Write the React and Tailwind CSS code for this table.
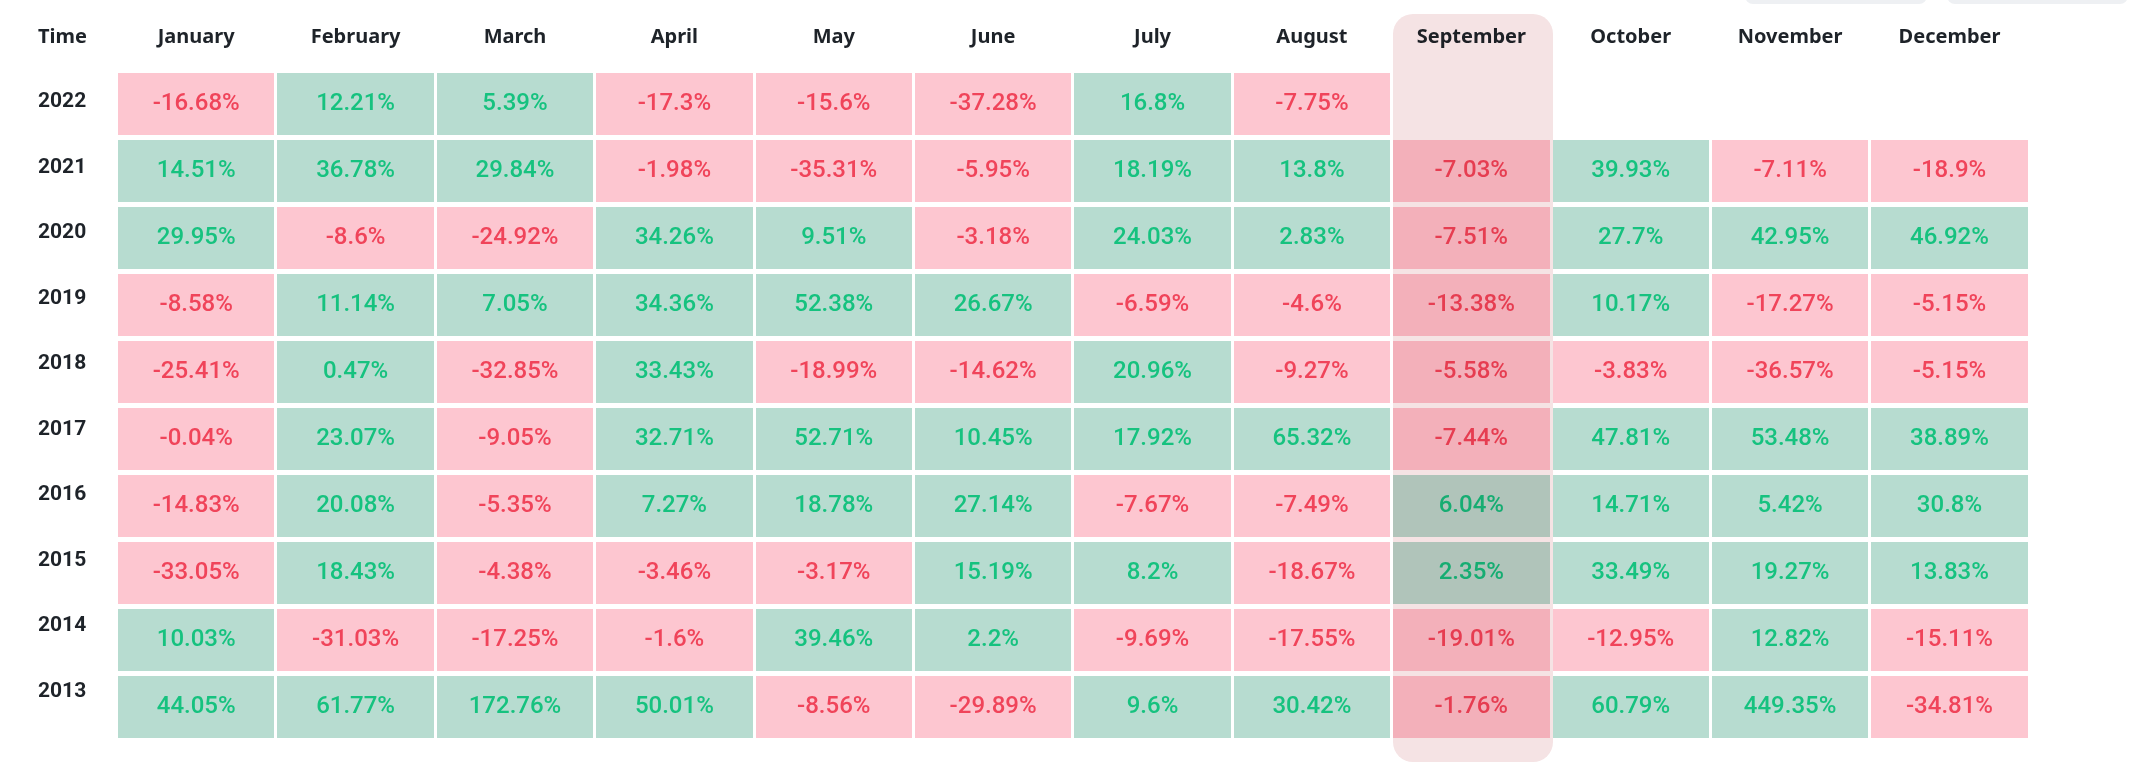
// Monthly returns heatmap — rendement mensuel par année, colonne courante surlignée.
import React from 'react';

const MONTHS = [
  'January', 'February', 'March', 'April', 'May', 'June',
  'July', 'August', 'September', 'October', 'November', 'December',
];

const ROWS = [
  ['2022', ['-16.68%', '12.21%', '5.39%', '-17.3%', '-15.6%', '-37.28%', '16.8%', '-7.75%']],
  ['2021', ['14.51%', '36.78%', '29.84%', '-1.98%', '-35.31%', '-5.95%', '18.19%', '13.8%', '-7.03%', '39.93%', '-7.11%', '-18.9%']],
  ['2020', ['29.95%', '-8.6%', '-24.92%', '34.26%', '9.51%', '-3.18%', '24.03%', '2.83%', '-7.51%', '27.7%', '42.95%', '46.92%']],
  ['2019', ['-8.58%', '11.14%', '7.05%', '34.36%', '52.38%', '26.67%', '-6.59%', '-4.6%', '-13.38%', '10.17%', '-17.27%', '-5.15%']],
  ['2018', ['-25.41%', '0.47%', '-32.85%', '33.43%', '-18.99%', '-14.62%', '20.96%', '-9.27%', '-5.58%', '-3.83%', '-36.57%', '-5.15%']],
  ['2017', ['-0.04%', '23.07%', '-9.05%', '32.71%', '52.71%', '10.45%', '17.92%', '65.32%', '-7.44%', '47.81%', '53.48%', '38.89%']],
  ['2016', ['-14.83%', '20.08%', '-5.35%', '7.27%', '18.78%', '27.14%', '-7.67%', '-7.49%', '6.04%', '14.71%', '5.42%', '30.8%']],
  ['2015', ['-33.05%', '18.43%', '-4.38%', '-3.46%', '-3.17%', '15.19%', '8.2%', '-18.67%', '2.35%', '33.49%', '19.27%', '13.83%']],
  ['2014', ['10.03%', '-31.03%', '-17.25%', '-1.6%', '39.46%', '2.2%', '-9.69%', '-17.55%', '-19.01%', '-12.95%', '12.82%', '-15.11%']],
  ['2013', ['44.05%', '61.77%', '172.76%', '50.01%', '-8.56%', '-29.89%', '9.6%', '30.42%', '-1.76%', '60.79%', '449.35%', '-34.81%']],
];

const HEAD = "font-['Noto_Sans',Roboto,sans-serif]";
const NUM = "font-['Roboto','Liberation_Sans',sans-serif]";

function Cell({ value }) {
  if (!value) return <div className="h-[62px]" />;
  const neg = value.startsWith('-');
  return (
    <div
      className={`h-[62px] flex items-center justify-center pb-[4px] text-[24px] font-medium ${NUM} ${
        neg ? 'bg-[#fdc6d0] text-[#f0445a]' : 'bg-[#b7dcd0] text-[#16c27f]'
      }`}
    >
      {value}
    </div>
  );
}

export default function App() {
  return (
    <div className="w-[2135px] h-[782px] bg-white overflow-hidden text-[#1e2329]">
      {/* toolbar coupée en haut */}
      <div className="h-[4px] overflow-hidden flex justify-end gap-[20px] pr-[7px]">
        <div className="w-[182px] h-[20px] -mt-[16px] rounded-[8px] bg-[#eef0f3]" />
        <div className="w-[181px] h-[20px] -mt-[16px] rounded-[8px] bg-[#eef0f3]" />
      </div>

      <div className="flex">
        {/* colonne des années */}
        <div className="w-[118px] pl-[38px] flex flex-col">
          <div className={`h-[69px] pt-[19px] text-[20px] leading-[26px] font-bold ${HEAD}`}>Time</div>
          <div className="-mt-[5px] flex flex-col">
            {ROWS.map(([year]) => (
              <div
                key={year}
                className={`h-[65.5px] flex items-center text-[21px] font-bold ${NUM}`}
              >
                {year}
              </div>
            ))}
          </div>
        </div>

        {/* grille des mois */}
        <div className="relative">
          <div className="grid grid-cols-[repeat(12,156.4px)] gap-x-[3px]">
            {MONTHS.map((m) => (
              <div
                key={m}
                className={`h-[69px] pt-[19px] text-center text-[20px] leading-[26px] font-bold ${HEAD}`}
              >
                {m}
              </div>
            ))}
          </div>
          <div className="grid grid-cols-[repeat(12,156.4px)] gap-x-[3px] gap-y-[5px]">
            {ROWS.map(([year, vals]) =>
              MONTHS.map((m, i) => <Cell key={year + m} value={vals[i]} />)
            )}
          </div>

          {/* surlignage du mois courant */}
          <div className="pointer-events-none absolute left-[1275px] top-[10px] w-[160px] h-[748px] rounded-[20px] bg-[#f5e3e4] mix-blend-multiply" />
        </div>
      </div>
    </div>
  );
}
